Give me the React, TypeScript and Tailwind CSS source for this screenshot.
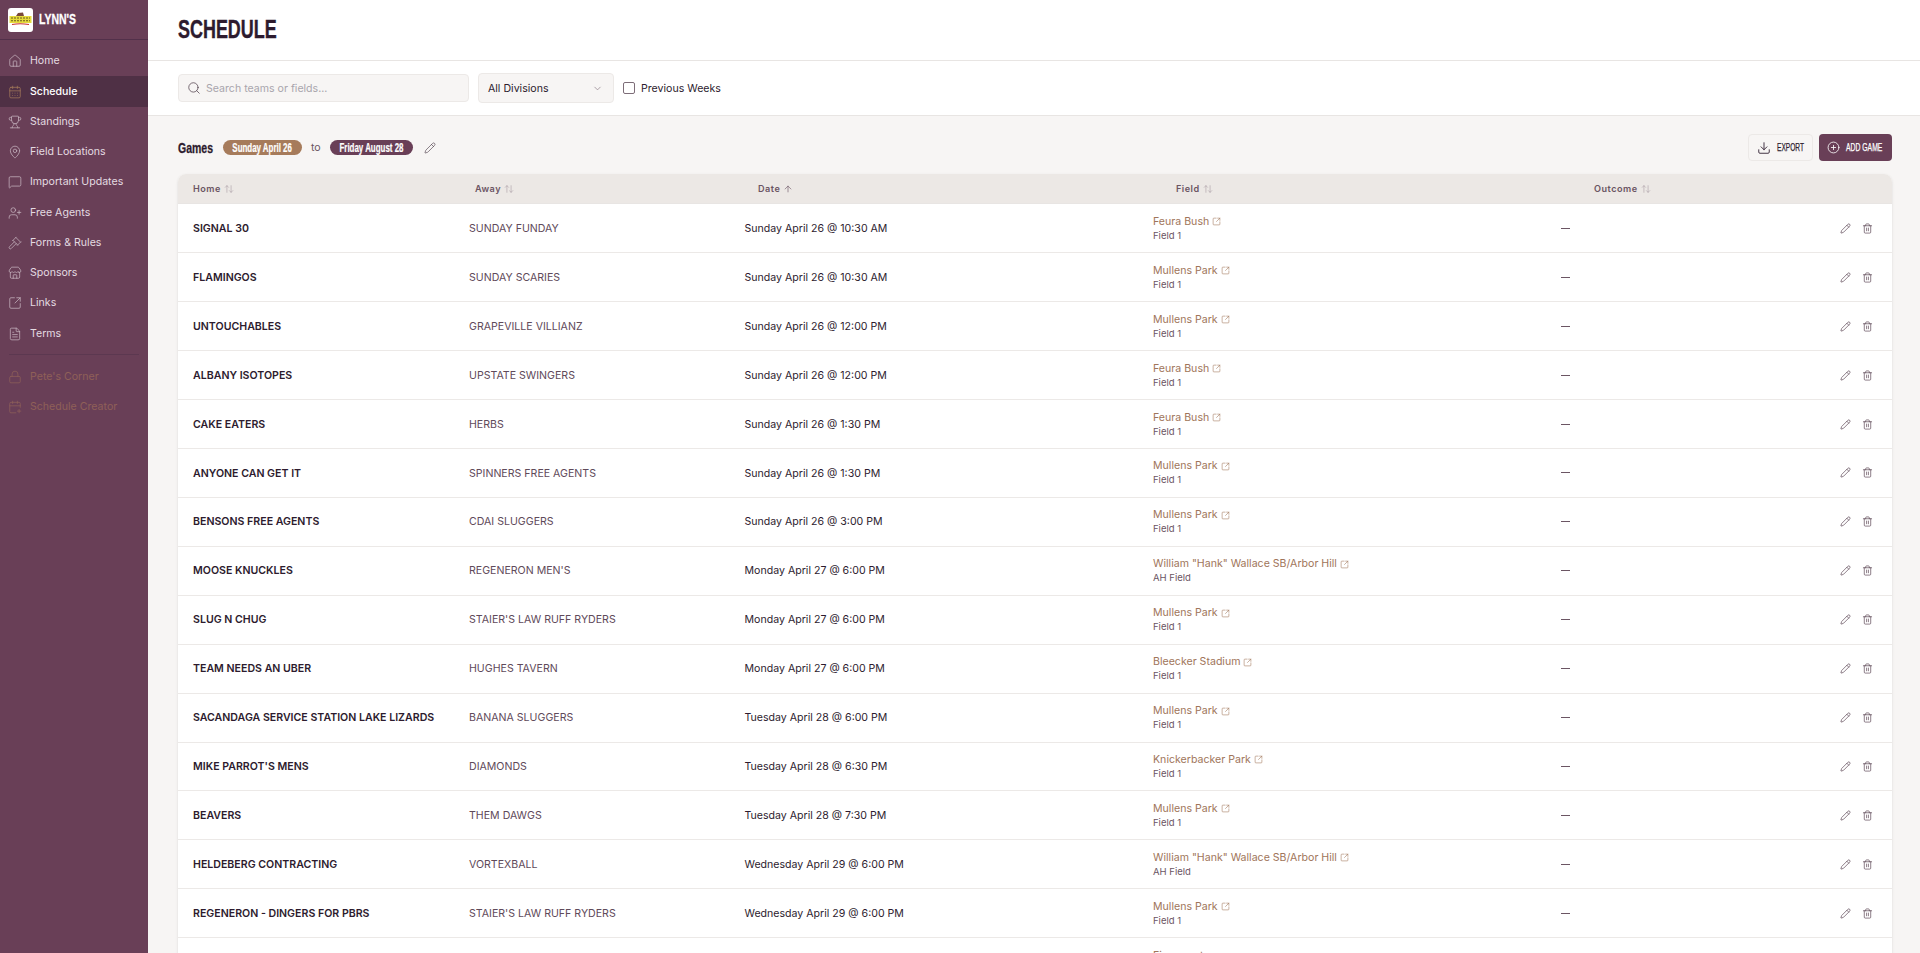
import React from "react";
import {
  House,
  CalendarDays,
  Trophy,
  MapPin,
  MessageSquare,
  UserPlus,
  Gavel,
  Store,
  SquareArrowOutUpRight,
  FileText,
  Lock,
  CalendarPlus,
  Search,
  ChevronDown,
  ArrowUpDown,
  ArrowUp,
  Pencil,
  Trash2,
  Download,
  CirclePlus,
} from "lucide-react";

const navItems = [
  { label: "Home", icon: House },
  { label: "Schedule", icon: CalendarDays, active: true },
  { label: "Standings", icon: Trophy },
  { label: "Field Locations", icon: MapPin },
  { label: "Important Updates", icon: MessageSquare },
  { label: "Free Agents", icon: UserPlus },
  { label: "Forms & Rules", icon: Gavel },
  { label: "Sponsors", icon: Store },
  { label: "Links", icon: SquareArrowOutUpRight },
  { label: "Terms", icon: FileText },
];

const games = [
  ["SIGNAL 30", "SUNDAY FUNDAY", "Sunday April 26 @ 10:30 AM", "Feura Bush", "Field 1"],
  ["FLAMINGOS", "SUNDAY SCARIES", "Sunday April 26 @ 10:30 AM", "Mullens Park", "Field 1"],
  ["UNTOUCHABLES", "GRAPEVILLE VILLIANZ", "Sunday April 26 @ 12:00 PM", "Mullens Park", "Field 1"],
  ["ALBANY ISOTOPES", "UPSTATE SWINGERS", "Sunday April 26 @ 12:00 PM", "Feura Bush", "Field 1"],
  ["CAKE EATERS", "HERBS", "Sunday April 26 @ 1:30 PM", "Feura Bush", "Field 1"],
  ["ANYONE CAN GET IT", "SPINNERS FREE AGENTS", "Sunday April 26 @ 1:30 PM", "Mullens Park", "Field 1"],
  ["BENSONS FREE AGENTS", "CDAI SLUGGERS", "Sunday April 26 @ 3:00 PM", "Mullens Park", "Field 1"],
  ["MOOSE KNUCKLES", "REGENERON MEN'S", "Monday April 27 @ 6:00 PM", 'William "Hank" Wallace SB/Arbor Hill', "AH Field"],
  ["SLUG N CHUG", "STAIER'S LAW RUFF RYDERS", "Monday April 27 @ 6:00 PM", "Mullens Park", "Field 1"],
  ["TEAM NEEDS AN UBER", "HUGHES TAVERN", "Monday April 27 @ 6:00 PM", "Bleecker Stadium", "Field 1"],
  ["SACANDAGA SERVICE STATION LAKE LIZARDS", "BANANA SLUGGERS", "Tuesday April 28 @ 6:00 PM", "Mullens Park", "Field 1"],
  ["MIKE PARROT'S MENS", "DIAMONDS", "Tuesday April 28 @ 6:30 PM", "Knickerbacker Park", "Field 1"],
  ["BEAVERS", "THEM DAWGS", "Tuesday April 28 @ 7:30 PM", "Mullens Park", "Field 1"],
  ["HELDEBERG CONTRACTING", "VORTEXBALL", "Wednesday April 29 @ 6:00 PM", 'William "Hank" Wallace SB/Arbor Hill', "AH Field"],
  ["REGENERON - DINGERS FOR PBRS", "STAIER'S LAW RUFF RYDERS", "Wednesday April 29 @ 6:00 PM", "Mullens Park", "Field 1"],
];

// no condensed display face on the box, so squeeze Liberation Sans bold
const condensed = "font-['Liberation_Sans',sans-serif] font-bold whitespace-nowrap";

const SortHead = ({ label, sorted }: { label: string; sorted?: boolean }) => (
  <div className="flex items-center gap-[3px] text-[9.1px] font-semibold tracking-[0.5px] text-[#6b5563]">
    {label}
    {sorted ? (
      <ArrowUp size={10} strokeWidth={1.5} className="text-[#6b5563]" />
    ) : (
      <ArrowUpDown size={10} strokeWidth={1.5} className="text-[#ada2a8]" />
    )}
  </div>
);

const App = () => {
  return (
    <div className="flex h-screen w-full overflow-hidden bg-[#f7f5f4] font-['Inter',sans-serif] text-[#2d1b2e]">
      {/* Sidebar */}
      <aside className="flex w-[148px] shrink-0 flex-col bg-[#693f57]">
        <div className="flex h-10 items-center gap-[6px] border-b border-[#52304a] pl-2">
          <div className="flex h-6 w-[25px] items-center justify-center rounded-[3px] bg-white">
            <svg viewBox="0 0 25 24" className="h-6 w-[25px]">
              <path d="M8 8 L10 5 L15 4.5 L16 8 Z" fill="#7a4a3a" />
              <rect x="1.5" y="8" width="22" height="7" fill="#e6dc3c" />
              <path d="M3 10h19M3 12.8h19" stroke="#6b5a1c" strokeWidth="1.1" strokeDasharray="2 1" />
              <path d="M4 16.5 Q12 15 21 16.5" stroke="#c8322a" strokeWidth="1.2" fill="none" />
            </svg>
          </div>
          <span className={`${condensed} w-[38px] origin-left scale-x-[0.7] text-[15px] text-white [-webkit-text-stroke:0.3px]`}>LYNN'S</span>
        </div>

        <nav className="flex flex-col pt-[6.2px]">
          {navItems.map((item) => {
            const Icon = item.icon;
            return (
              <div
                key={item.label}
                className={`flex h-[30.25px] items-center gap-[8px] pl-[8px] text-[10.6px] ${
                  item.active ? "bg-[#4f3045] font-medium text-white" : "text-[#e4dbe1]"
                }`}
              >
                <Icon
                  size={14}
                  strokeWidth={1.25}
                  className={item.active ? "text-[#a67b5b]" : "text-[#c9b8c3]"}
                />
                {item.label}
              </div>
            );
          })}
        </nav>

        <div className="mx-[9px] mt-[5px] border-t border-[#5c3850]" />

        <div className="flex flex-col pt-[7px] text-[10.6px] text-[#8f6058]">
          <div className="flex h-[30.25px] items-center gap-[8px] pl-[8px]">
            <Lock size={14} strokeWidth={1.25} />
            Pete's Corner
          </div>
          <div className="flex h-[30.25px] items-center gap-[8px] pl-[8px]">
            <CalendarPlus size={14} strokeWidth={1.25} />
            Schedule Creator
          </div>
        </div>
      </aside>

      {/* Main */}
      <main className="flex min-w-0 flex-1 flex-col">
        <header className="flex h-[61px] shrink-0 items-center border-b border-[#e8e5e3] bg-white pb-[2px] pl-[30px]">
          <h1 className={`${condensed} origin-left scale-x-[0.69] text-[26px] text-[#2d1b2e] [-webkit-text-stroke:0.4px]`}>SCHEDULE</h1>
        </header>

        <div className="flex h-[55px] shrink-0 items-center gap-[9px] border-b border-[#e8e5e3] bg-white pl-[30px] text-[10.6px] leading-none">
          <div className="flex h-[28px] w-[291px] items-center gap-[5px] rounded-[4px] border border-[#ece9e7] bg-[#f7f5f4] pl-[8px] text-[#a9a5ad]">
            <Search size={14} strokeWidth={1.25} className="text-[#4a3a46]" />
            <span className="pt-[2px]">Search teams or fields...</span>
          </div>
          <div className="flex h-[30px] w-[136px] items-center justify-between rounded-[4px] border border-[#ece9e7] bg-[#f7f5f4] pl-[9px] pr-[10px] text-[#2d1b2e]">
            <span className="pt-[2px]">All Divisions</span>
            <ChevronDown size={11} strokeWidth={1.5} className="text-[#8a7b85]" />
          </div>
          <label className="flex items-center gap-[6px] text-[#2d1b2e]">
            <span className="h-3 w-3 rounded-[2px] border border-[#7d6d78] bg-white" />
            <span className="pt-[2px]">Previous Weeks</span>
          </label>
        </div>

        <section className="flex min-h-0 flex-1 flex-col pl-[30px] pr-[28px]">
          <div className="flex h-[58px] shrink-0 items-center pt-[5px]">
            <span className={`${condensed} w-[45px] origin-left translate-y-px scale-x-[0.7] text-[15px] text-[#2d1b2e] [-webkit-text-stroke:0.3px]`}>Games</span>
            <span className={`${condensed} flex h-[15px] w-[79px] items-center justify-center rounded-full bg-[#a67b5b] text-[12px] text-white [-webkit-text-stroke:0.2px]`}>
              <span className="scale-x-[0.66]">Sunday April 26</span>
            </span>
            <span className="mx-[9px] text-[10.6px] text-[#6b5563]">to</span>
            <span className={`${condensed} flex h-[15px] w-[83px] items-center justify-center rounded-full bg-[#693f57] text-[12px] text-white [-webkit-text-stroke:0.2px]`}>
              <span className="scale-x-[0.66]">Friday August 28</span>
            </span>
            <Pencil size={12} strokeWidth={1.25} className="ml-[11px] text-[#4a3a46]" />
            <div className="ml-auto flex gap-[6px]">
              <button className="flex h-[27px] w-[65px] items-center gap-[5.5px] rounded-[4px] border border-[#ece9e7] pl-[8px] text-[#2d1b2e]">
                <Download size={14} strokeWidth={1.5} />
                <span className={`${condensed} w-[27px] origin-left scale-x-[0.6] text-left text-[11px] font-normal [-webkit-text-stroke:0.25px]`}>EXPORT</span>
              </button>
              <button className="flex h-[27px] w-[73px] items-center gap-[5.5px] rounded-[4px] bg-[#693f57] pl-[8px] text-white">
                <CirclePlus size={13} strokeWidth={1.5} />
                <span className={`${condensed} w-[37px] origin-left scale-x-[0.62] text-left text-[11px] font-normal [-webkit-text-stroke:0.25px]`}>ADD GAME</span>
              </button>
            </div>
          </div>

          <div className="rounded-t-[8px] bg-white shadow-sm">
            <div className="grid h-[30.4px] grid-cols-[282px_283px_418px_418px_1fr] items-center rounded-t-[8px] border-b border-[#e8e5e3] bg-[#ece8e5] pl-[15px]">
              <SortHead label="Home" />
              <SortHead label="Away" />
              <SortHead label="Date" sorted />
              <SortHead label="Field" />
              <SortHead label="Outcome" />
            </div>
            {games.map((game, i) => (
              <div
                key={i}
                className="grid h-[48.93px] grid-cols-[276px_275.5px_408.5px_408px_1fr] items-center border-b border-[#ece9e7] pl-[15px] text-[10.6px]"
              >
                <div className="pt-px font-semibold text-[#2d1b2e]">{game[0]}</div>
                <div className="pt-px text-[#5f4a5a]">{game[1]}</div>
                <div className="pt-px text-[#2d1b2e]">{game[2]}</div>
                <div>
                  <div className="flex items-center gap-[3px] leading-[14px] text-[#a0755a]">
                    {game[3]}
                    <SquareArrowOutUpRight size={9} strokeWidth={1.5} />
                  </div>
                  <div className="text-[9.5px] leading-[13px] text-[#6b5563]">{game[4]}</div>
                </div>
                <div className="flex items-center justify-between pr-[19.5px]">
                  <span className="h-px w-[9px] bg-[#6b5563]" />
                  <div className="flex items-center gap-[11px] text-[#5a4553]">
                    <Pencil size={11} strokeWidth={1.5} />
                    <Trash2 size={11} strokeWidth={1.5} />
                  </div>
                </div>
              </div>
            ))}
            {/* next row, only the top of the field name is in view */}
            <div className="grid h-[48.93px] grid-cols-[276px_275.5px_408.5px_408px_1fr] items-center pl-[15px] text-[10.6px]">
              <div />
              <div />
              <div />
              <div>
                <div className="leading-[14px] text-[#a0755a]">Firemount</div>
                <div className="text-[9.5px] leading-[13px] text-[#6b5563]">Field 1</div>
              </div>
            </div>
          </div>
        </section>
      </main>
    </div>
  );
};

export default App;
